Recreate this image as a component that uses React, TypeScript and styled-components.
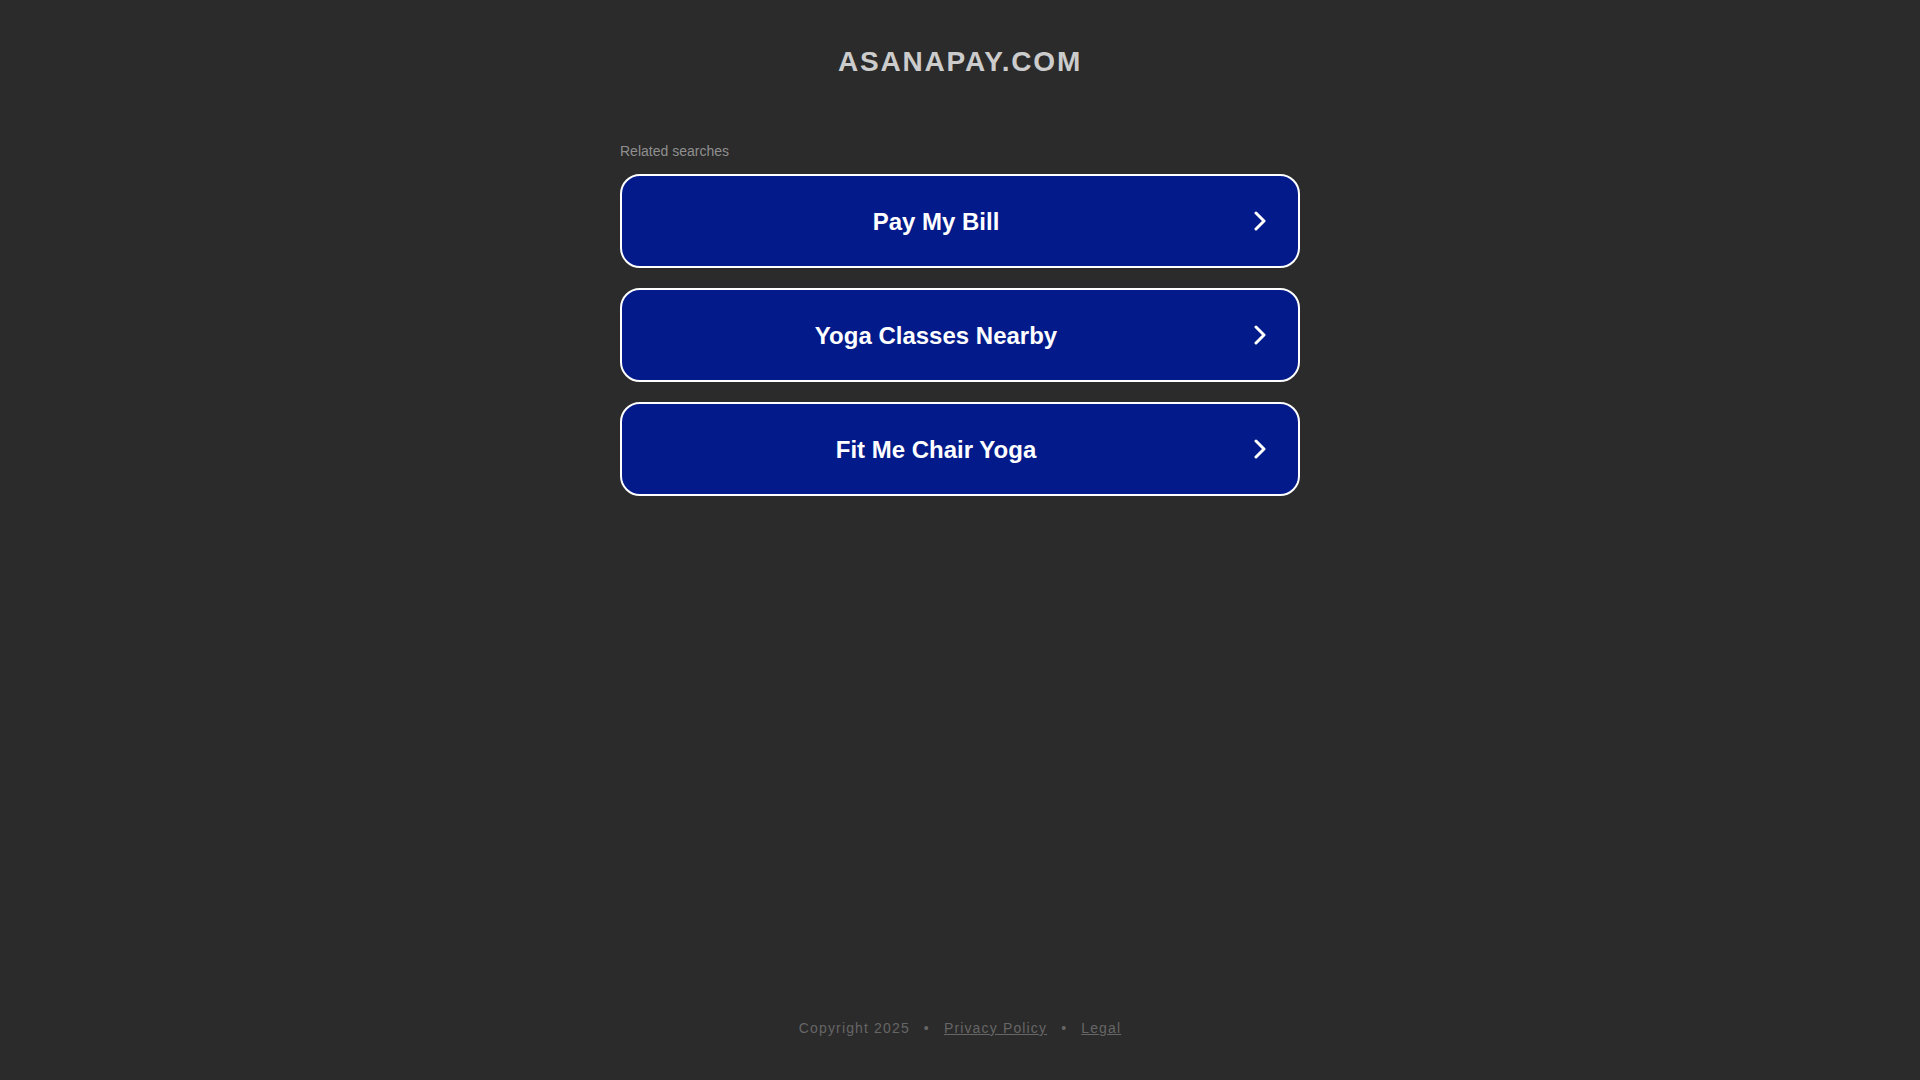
import React from 'react'
import styled, { createGlobalStyle } from 'styled-components'

const GlobalStyle = createGlobalStyle`
  html, body {
    margin: 0;
    padding: 0;
    background: #2b2b2b;
    font-family: 'Liberation Sans', Arial, sans-serif;
  }
`

const Page = styled.div`
  min-height: 100vh;
  display: flex;
  flex-direction: column;
  align-items: center;
`

const Title = styled.h1`
  margin: 0;
  padding-top: 46px;
  font-size: 28px;
  line-height: 32px;
  font-weight: 700;
  letter-spacing: 1.8px;
  color: #cccccc;
`

const Main = styled.main`
  width: 680px;
  margin-top: 65px;
  display: flex;
  flex-direction: column;
`

const Related = styled.div`
  font-size: 14px;
  line-height: 16px;
  color: #8f8f8f;
  margin-bottom: 15px;
`

const List = styled.div`
  display: flex;
  flex-direction: column;
  gap: 20px;
`

const Card = styled.a`
  box-sizing: border-box;
  height: 94px;
  display: flex;
  align-items: center;
  background: #021a8a;
  border: 2px solid #ffffff;
  border-radius: 20px;
  color: #ffffff;
  text-decoration: none;
  cursor: pointer;
`

const CardText = styled.span`
  flex: 1;
  text-align: center;
  font-size: 24px;
  font-weight: 700;
  padding-top: 1px;
`

const Arrow = styled.svg`
  flex: none;
  margin: 0 32px 0 4px;
`

const Footer = styled.footer`
  margin-top: auto;
  padding-bottom: 44px;
  display: flex;
  align-items: center;
  gap: 14px;
  font-size: 14px;
  line-height: 16px;
  letter-spacing: 1.15px;
  color: #666666;
`

const FooterLink = styled.a`
  color: #666666;
  text-decoration: underline;
`

const searches = ['Pay My Bill', 'Yoga Classes Nearby', 'Fit Me Chair Yoga']

export default function App() {
  return (
    <>
      <GlobalStyle />
      <Page>
        <Title>ASANAPAY.COM</Title>
        <Main>
          <Related>Related searches</Related>
          <List>
            {searches.map((item) => (
              <Card key={item}>
                <CardText>{item}</CardText>
                <Arrow width="12" height="20" viewBox="0 0 12 20">
                  <path
                    d="M2 2 L10 10 L2 18"
                    fill="none"
                    stroke="#ffffff"
                    strokeWidth="3"
                    strokeLinecap="round"
                    strokeLinejoin="round"
                  />
                </Arrow>
              </Card>
            ))}
          </List>
        </Main>
        <Footer>
          <span>Copyright 2025</span>
          <span>•</span>
          <FooterLink>Privacy Policy</FooterLink>
          <span>•</span>
          <FooterLink>Legal</FooterLink>
        </Footer>
      </Page>
    </>
  )
}
